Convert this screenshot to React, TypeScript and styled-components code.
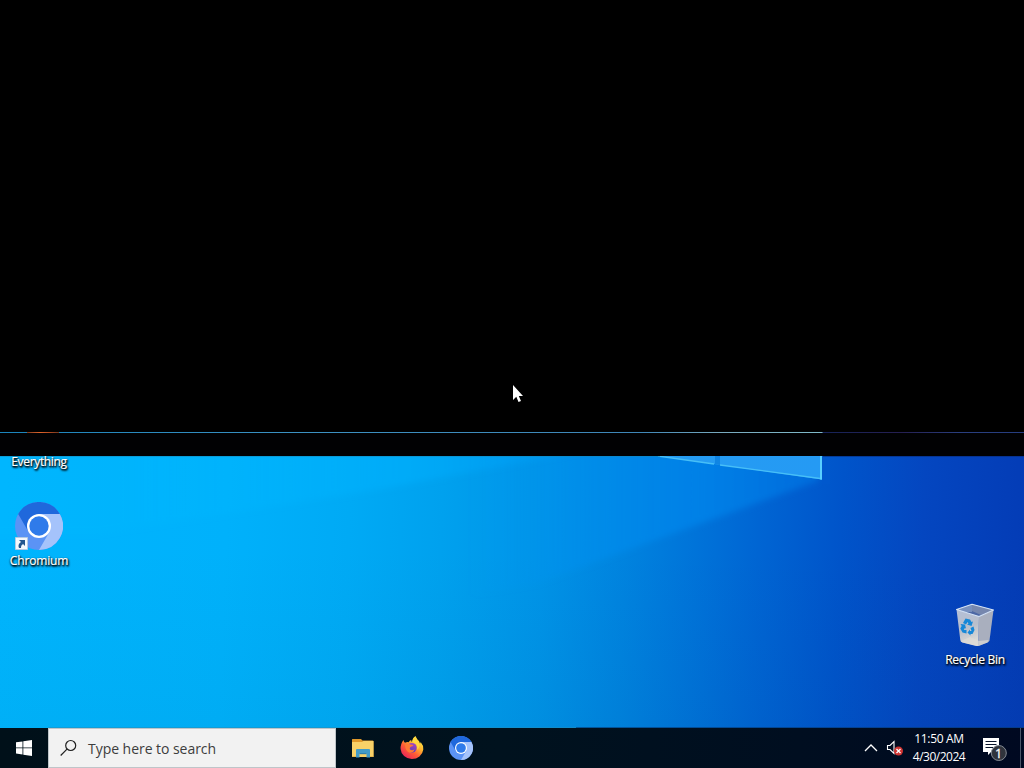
import React from 'react';
import styled, { createGlobalStyle } from 'styled-components';

const GlobalStyle = createGlobalStyle`
  html, body { margin: 0; background: #000; overflow: hidden; }
  * { box-sizing: border-box; }
`;

const Screen = styled.div`
  width: 1024px;
  height: 768px;
  display: flex;
  flex-direction: column;
  position: relative;
  background: #000;
  overflow: hidden;
  font-family: 'Open Sans', 'Noto Sans', sans-serif;
  font-size: 12px;
`;

const BlankArea = styled.div`
  flex: 0 0 432px;
`;

const ScanLine = styled.div`
  height: 1px;
  display: flex;
  background: linear-gradient(90deg, #1b84bc 0, #3c91c2 300px, #3f86b8 640px, #78a9be 720px, #7fb9c9 822px, #17245a 823px, #251f52 900px, #2a3f80 960px, #263d80 1024px);
`;

const ScanSpark = styled.div`
  width: 32px;
  margin-left: 27px;
  background: linear-gradient(90deg, #7c3a20, #e0642a 40%, #b44a20 70%, #6f3720);
`;

const BlankStrip = styled.div`
  flex: 0 0 23px;
  background: #010103;
`;

const Desktop = styled.main`
  flex: 0 0 272px;
  position: relative;
`;

const Wallpaper = styled.svg`
  position: absolute;
  inset: 0;
  display: block;
`;

const Shortcut = styled.div<{ $x: number; $y: number }>`
  position: absolute;
  left: ${p => p.$x}px;
  top: ${p => p.$y}px;
  width: 76px;
  display: flex;
  flex-direction: column;
  align-items: center;
`;

const ShortcutLabel = styled.span<{ $tracking: number }>`
  color: #fff;
  line-height: 16px;
  white-space: nowrap;
  letter-spacing: ${p => p.$tracking}px;
  text-shadow: 0 1px 2px #000, 1px 1px 2px #000, 1px 2px 2px rgba(0, 0, 0, 0.6);
  -webkit-text-stroke: 0.2px #fff;
`;

const Taskbar = styled.footer`
  flex: 0 0 40px;
  display: flex;
  background: linear-gradient(90deg, #001019 0, #00121e 500px, #000e20 800px, #000921 1024px);
`;

const TaskButton = styled.div<{ $width: number }>`
  width: ${p => p.$width}px;
  display: flex;
  align-items: center;
  justify-content: center;
`;

const SearchBox = styled.div`
  width: 288px;
  display: flex;
  align-items: center;
  padding-left: 11px;
  gap: 11px;
  background: #f2f2f2;
  border: 1px solid #bfc5c9;
  color: #3d3d3d;
  font-size: 14px;
  letter-spacing: -0.04px;
`;

const SearchText = styled.span`
  line-height: 20px;
  padding-top: 1px;
`;

const PinnedApps = styled.div`
  display: flex;
  padding-left: 2px;
`;

const Tray = styled.div`
  margin-left: auto;
  display: flex;
`;

const Clock = styled.div`
  width: 63px;
  display: flex;
  flex-direction: column;
  align-items: center;
  padding: 2px 0 0 1px;
  color: #fff;
  line-height: 18px;
  white-space: nowrap;
`;

const ClockLine = styled.span<{ $tracking: number }>`
  letter-spacing: ${p => p.$tracking}px;
`;

const ShowDesktop = styled.div`
  width: 4px;
  border-left: 1px solid #4b5568;
`;

const Pointer = styled.svg`
  position: absolute;
  left: 512px;
  top: 384px;
`;

const ChromiumIcon = ({ size }: { size: number }) => (
  <svg width={size} height={size} viewBox="0 0 48 48">
    <circle cx="24" cy="24" r="24" fill="#5b93f5" />
    <path d="M24 12H44.800A24 24 0 0 1 24 48L34.400 30Z" fill="#a5c3fb" />
    <path d="M3.200 12A24 24 0 0 1 44.800 12H24L13.600 30Z" fill="#1f68dc" />
    <circle cx="24" cy="24" r="12" fill="#fff" />
    <circle cx="24" cy="24" r="9.700" fill="#2f7bea" />
  </svg>
);

const IconStack = styled.div`
  position: relative;
  width: 48px;
  height: 48px;
  margin-bottom: 3px;
`;

const LinkArrow = styled.svg`
  position: absolute;
  left: 0;
  bottom: 0;
`;

const RecycleBinIcon = () => (
  <svg width="48" height="48" viewBox="0 0 48 48">
    <defs>
      <linearGradient id="binFront" x1="0" y1="0" x2="0.300" y2="1">
        <stop offset="0" stopColor="#b3bfd8" />
        <stop offset="0.600" stopColor="#b9bfcb" />
        <stop offset="1" stopColor="#dad9d6" />
      </linearGradient>
    </defs>
    <path d="M5.500 8.500L21 3.300L42.500 9L28 15.500Z" fill="#4d68a5" />
    <path d="M5.500 8.500L21 3.300V11L12 11Z" fill="#7890be" />
    <path d="M21 3.300L42.500 9L30 14L21 10Z" fill="#7687ae" />
    <path d="M5.500 8.500L28 15.500L27.500 45Q26 45.300 24 44.700L11.500 41.500Q9.500 41 9.300 39Z" fill="url(#binFront)" />
    <path d="M28 15.500L42.500 9L38.500 39.500Q38 41 36.500 41.600L27.500 45Z" fill="#a9afbe" />
    <path d="M5.500 8.500L21 3.300L42.500 9L28 15.500Z" fill="none" stroke="#d5e3f6" strokeWidth="1.100" strokeLinejoin="round" />
    <path d="M10 40L19 36L28 40L37.500 39L36.500 41.600L27.500 45L11.500 41.500Z" fill="#dedbd6" opacity="0.700" />
    <g fill="#1688d8">
      <path d="M12 22L14.500 17.500L19 18.500L20.500 21L22 20.500L20.500 25L16 23.500L17.500 22.500L16.500 21L15 23.500Z" />
      <path d="M9.500 23L14 23.500L15 27.500L13.800 27L12.800 29H15.500V32.500L11.500 31.500L9.300 27.500L10.700 25Z" />
      <path d="M19.500 27L22.500 25.500L23.500 29L21.500 33L19.500 33V34.500L16.500 31.500L19 28.500V30L20.500 30Z" />
    </g>
  </svg>
);

const FirefoxIcon = () => (
  <svg width="24" height="24" viewBox="0 0 24 24">
    <defs>
      <linearGradient id="foxBody" x1="0.850" y1="0.100" x2="0.200" y2="0.950">
        <stop offset="0" stopColor="#fff04a" />
        <stop offset="0.350" stopColor="#ffb02e" />
        <stop offset="0.620" stopColor="#ff5d35" />
        <stop offset="1" stopColor="#ea2458" />
      </linearGradient>
      <linearGradient id="foxGlobe" x1="0.700" y1="0" x2="0.300" y2="1">
        <stop offset="0" stopColor="#a345c8" />
        <stop offset="1" stopColor="#5c3dae" />
      </linearGradient>
    </defs>
    <path d="M3.500 4Q3.800 6 5 6.700Q7 5.700 8.700 6.200Q9.500 4.500 11.300 4Q11 5.500 12.200 6Q12.500 2 15.500 .2Q16 3 19 5L20 7.500Q20.900 7 20.500 5.700Q23.700 9.500 23.300 13.500A11.400 10.800 0 0 1 .6 13Q.3 8 3.500 4Z" fill="url(#foxBody)" />
    <circle cx="11.800" cy="11.800" r="4.900" fill="url(#foxGlobe)" />
    <path d="M5 8.500Q8.500 7 10.400 8.500L13.500 9.100Q12.800 10.500 10.700 10.800Q9.200 11.800 10 13.500Q12.400 15 14.500 13.200Q13.500 17 9.700 16.700Q5.300 15.500 5 8.500Z" fill="#ff7a34" />
    <path d="M12.200 6Q18.500 8 17.200 14Q20.500 10.500 19 6.500L15.500 .2Q12.500 2 12.200 6Z" fill="#ffd83f" />
  </svg>
);

const FolderIcon = () => (
  <svg width="24" height="24" viewBox="0 0 24 24">
    <path d="M1 3.500Q1 3 1.500 3H10L11.500 4.500H21.500Q22.500 4.500 22.500 5.500V20H1Z" fill="#e0992b" />
    <path d="M1 6H11L12.500 5H22.500V21H1Z" fill="#f8d168" />
    <path d="M5 21.500V14Q5 13 6 13H18Q19 13 19 14V21.500H15.500V17.500H8.500V21.500Z" fill="#429bc8" />
    <path d="M8.500 17H15.500V18.200H8.500Z" fill="#2f82b0" />
    <path d="M1 20H5V21H1ZM19 20H22.500V21H19Z" fill="#e7b64b" />
  </svg>
);

const DesktopScene = () => (
  <Wallpaper width="1024" height="272" viewBox="0 0 1024 272">
    <defs>
      <linearGradient id="sky" gradientUnits="userSpaceOnUse" x1="0" y1="80" x2="1024" y2="120">
        <stop offset="0" stopColor="#00b5fe" />
        <stop offset="0.220" stopColor="#00b1fb" />
        <stop offset="0.340" stopColor="#00aaf5" />
        <stop offset="0.430" stopColor="#00a1ee" />
        <stop offset="0.530" stopColor="#0093e7" />
        <stop offset="0.610" stopColor="#0083df" />
        <stop offset="0.680" stopColor="#0073d9" />
        <stop offset="0.740" stopColor="#0065d3" />
        <stop offset="0.820" stopColor="#0054ca" />
        <stop offset="0.900" stopColor="#0446c0" />
        <stop offset="1" stopColor="#043cb6" />
      </linearGradient>
      <linearGradient id="beam" gradientUnits="userSpaceOnUse" x1="470" y1="0" x2="822" y2="0">
        <stop offset="0" stopColor="#0099f3" stopOpacity="0" />
        <stop offset="0.400" stopColor="#008dee" stopOpacity="0.600" />
        <stop offset="0.680" stopColor="#0083ea" stopOpacity="0.800" />
        <stop offset="1" stopColor="#006ede" stopOpacity="0.850" />
      </linearGradient>
      <linearGradient id="upperBeam" gradientUnits="userSpaceOnUse" x1="120" y1="0" x2="600" y2="0">
        <stop offset="0" stopColor="#00bcff" stopOpacity="0.150" />
        <stop offset="0.600" stopColor="#00b1ff" stopOpacity="0.500" />
        <stop offset="1" stopColor="#009df8" stopOpacity="0.250" />
      </linearGradient>
      <linearGradient id="lowerShade" gradientUnits="userSpaceOnUse" x1="0" y1="90" x2="0" y2="272">
        <stop offset="0" stopColor="#003040" stopOpacity="0" />
        <stop offset="1" stopColor="#003040" stopOpacity="0.040" />
      </linearGradient>
      <linearGradient id="glass" x1="0" y1="0" x2="1" y2="0">
        <stop offset="0" stopColor="#259cf2" />
        <stop offset="1" stopColor="#259af4" />
      </linearGradient>
      <filter id="soft" x="-5%" y="-20%" width="110%" height="140%"><feGaussianBlur stdDeviation="3" /></filter>
    </defs>
    <rect width="1024" height="272" fill="url(#sky)" />
    <rect y="90" width="1024" height="182" fill="url(#lowerShade)" />
    <path d="M470 -10H818V25L540 126L440 145Z" fill="url(#beam)" filter="url(#soft)" />
    <rect x="822" width="8" height="28" fill="#0058cd" />
    <path d="M-20 -10H610L380 33L100 77H-20Z" fill="url(#upperBeam)" filter="url(#soft)" />
    <path d="M658 0H822V23.500Z" fill="url(#glass)" />
    <path d="M715 0H720V9L715 8Z" fill="#1085e3" />
    <path d="M658 0L714 8M720 9L822 22.700" fill="none" stroke="#47bff7" strokeWidth="1.400" />
    <path d="M821 0V23.500" stroke="#58cfff" strokeWidth="2" />
    <path d="M0 .5H660" stroke="#1587b8" opacity="0.500" />
    <path d="M823 .5H1024" stroke="#092c78" opacity="0.600" />
    <path d="M48 271.500H576" stroke="#238fb9" opacity="0.500" />
    <path d="M576 271.500H1024" stroke="#063c77" opacity="0.650" />
  </Wallpaper>
);

export default function App() {
  return (
    <Screen>
      <GlobalStyle />
      <BlankArea />
      <ScanLine><ScanSpark /></ScanLine>
      <BlankStrip />
      <Desktop>
        <DesktopScene />
        <Shortcut $x={1} $y={-2}>
          <ShortcutLabel $tracking={-0.33}>Everything</ShortcutLabel>
        </Shortcut>
        <Shortcut $x={1} $y={46}>
          <IconStack>
            <ChromiumIcon size={48} />
            <LinkArrow width="13" height="13" viewBox="0 0 13 13">
              <path d="M.5 .5H12.500V12.500H.5Z" fill="#f5f8fc" stroke="#b5cbe4" />
              <path d="M4 3H10V9L8 7Q5.500 8.500 6 11H4Q2.300 7.500 6 5Z" fill="#24578f" />
            </LinkArrow>
          </IconStack>
          <ShortcutLabel $tracking={-0.15}>Chromium</ShortcutLabel>
        </Shortcut>
        <Shortcut $x={937} $y={145}>
          <IconStack><RecycleBinIcon /></IconStack>
          <ShortcutLabel $tracking={-0.28}>Recycle Bin</ShortcutLabel>
        </Shortcut>
      </Desktop>
      <Taskbar>
        <TaskButton $width={48}>
          <svg width="16" height="16" viewBox="0 0 16 16" fill="#fff">
            <path d="M0 2.300L6.500 1.400V7.500H0ZM7.300 1.300L16 0V7.500H7.300ZM0 8.300H6.500V14.500L0 13.600ZM7.300 8.300H16V16L7.300 14.700Z" />
          </svg>
        </TaskButton>
        <SearchBox>
          <svg width="17" height="18" viewBox="0 0 17 18" fill="none" stroke="#202020" strokeWidth="1.200">
            <circle cx="10.700" cy="6.500" r="5" />
            <path d="M7 10.200L.7 16.500" />
          </svg>
          <SearchText>Type here to search</SearchText>
        </SearchBox>
        <PinnedApps>
          <TaskButton $width={49}><FolderIcon /></TaskButton>
          <TaskButton $width={49}><FirefoxIcon /></TaskButton>
          <TaskButton $width={49}><ChromiumIcon size={24} /></TaskButton>
        </PinnedApps>
        <Tray>
          <TaskButton $width={24}>
            <svg width="14" height="8" viewBox="0 0 14 8" fill="none" stroke="#fff" strokeWidth="1.300"><path d="M1 7L7 1L13 7" /></svg>
          </TaskButton>
          <TaskButton $width={24}>
            <svg width="18" height="16" viewBox="0 0 18 16">
              <path d="M1.500 5.500H4L8 1.500V13.500L4 9.500H1.500Z" fill="none" stroke="#fff" strokeWidth="1.100" />
              <circle cx="12.500" cy="11" r="4.500" fill="#cf3432" />
              <path d="M10.500 9L14.500 13M14.500 9L10.500 13" stroke="#fff" strokeWidth="1.300" />
            </svg>
          </TaskButton>
          <Clock>
            <ClockLine $tracking={-0.35}>11:50 AM</ClockLine>
            <ClockLine $tracking={-0.5}>4/30/2024</ClockLine>
          </Clock>
          <TaskButton $width={50}>
            <svg width="26" height="26" viewBox="0 0 26 26">
              <path d="M1 3H17V17H9L6 20V17H1Z" fill="#fff" />
              <path d="M3.500 6.500H14.500M3.500 9.500H14.500M3.500 12.500H11" stroke="#09142a" strokeWidth="1.200" />
              <circle cx="16.800" cy="18" r="7.500" fill="#30343c" stroke="#858b94" />
              <text x="16.600" y="22.500" textAnchor="middle" fill="#fff" stroke="#fff" strokeWidth="0.300" fontFamily="Open Sans, sans-serif" fontSize="12.500">1</text>
            </svg>
          </TaskButton>
          <ShowDesktop />
        </Tray>
      </Taskbar>
      <Pointer width="12" height="20" viewBox="0 0 12 20">
        <path d="M1 1V16L4.300 12.800L6.500 18L9 17L6.800 12H11Z" fill="#fff" />
      </Pointer>
    </Screen>
  );
}
